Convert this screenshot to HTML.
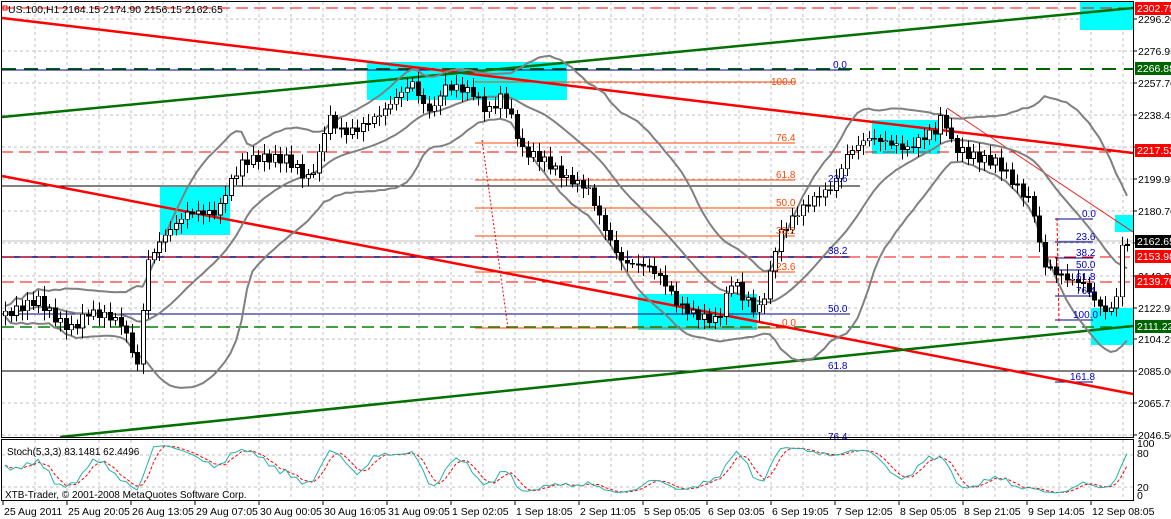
<!DOCTYPE html><html><head><meta charset="utf-8"><style>
html,body{margin:0;padding:0;background:#fff;width:1171px;height:519px;overflow:hidden}
svg{display:block;font-family:"Liberation Sans",sans-serif}
</style></head><body>
<svg id="s" width="1171" height="519" viewBox="0 0 1171 519" xmlns="http://www.w3.org/2000/svg" shape-rendering="crispEdges">
<rect width="1171" height="519" fill="#fff"/>
<g id="grid"></g>
<g fill="#00ffff">
<rect x="160" y="187" width="70" height="48"/>
<rect x="367" y="62" width="200" height="38"/>
<rect x="638" y="294" width="119" height="36"/>
<rect x="872" y="120" width="68" height="34"/>
<rect x="1080" y="2" width="53" height="28"/>
<rect x="1115" y="215" width="18" height="17"/>
<rect x="1091" y="308" width="42" height="37"/>
</g>
<g id="lines" shape-rendering="auto">
<line x1="2" y1="8" x2="1133" y2="8" stroke="#f00" stroke-dasharray="12,6"/>
<line x1="2" y1="69" x2="1133" y2="69" stroke="#006400" stroke-width="2" stroke-dasharray="14,8"/>
<line x1="2" y1="70" x2="850" y2="70" stroke="#000080"/>
<line x1="2" y1="186" x2="860" y2="186" stroke="#000"/>
<line x1="2" y1="371" x2="1133" y2="371" stroke="#000"/>
<line x1="2" y1="257" x2="850" y2="257" stroke="#000080" stroke-width="1.5"/>
<line x1="2" y1="257" x2="1133" y2="257" stroke="#f00" stroke-dasharray="12,6"/>
<line x1="2" y1="282" x2="1133" y2="282" stroke="#f00" stroke-dasharray="12,6"/>
<line x1="2" y1="314" x2="850" y2="314" stroke="#000080"/>
<line x1="2" y1="327" x2="1133" y2="327" stroke="#008000" stroke-dasharray="12,6" stroke-width="1.5"/>
<line x1="2" y1="241" x2="1133" y2="241" stroke="#c0c0c0"/>
<line x1="1" y1="152" x2="1133" y2="152" stroke="#f00" stroke-dasharray="12,6"/>
<g stroke="#ff4500">
<line x1="475" y1="82" x2="795" y2="82"/><line x1="475" y1="143" x2="795" y2="143"/>
<line x1="475" y1="180" x2="795" y2="180"/><line x1="475" y1="208" x2="795" y2="208"/>
<line x1="475" y1="236" x2="795" y2="236"/><line x1="475" y1="272" x2="795" y2="272"/>
<line x1="475" y1="328" x2="795" y2="328"/>
</g>
<line x1="482" y1="140" x2="508" y2="328" stroke="#f00" stroke-dasharray="2,2"/>
<g stroke="#00008b">
<line x1="1055" y1="219" x2="1093" y2="219"/><line x1="1055" y1="242" x2="1093" y2="242"/>
<line x1="1055" y1="258" x2="1093" y2="258"/><line x1="1055" y1="270" x2="1093" y2="270"/>
<line x1="1055" y1="296" x2="1093" y2="296"/><line x1="1055" y1="320" x2="1093" y2="320"/>
<line x1="1055" y1="382" x2="1093" y2="382"/>
</g>
<line x1="1057" y1="218" x2="1059" y2="322" stroke="#f00" stroke-dasharray="3,2"/>
<line x1="947" y1="108" x2="1133" y2="232" stroke="#f00" stroke-width="0.8"/>
<line x1="2" y1="18" x2="1133" y2="153" stroke="#f00" stroke-width="2.5"/>
<line x1="2" y1="176" x2="1133" y2="394" stroke="#f00" stroke-width="2.5"/>
<line x1="2" y1="117" x2="1133" y2="8" stroke="#007000" stroke-width="2.5"/>
<line x1="60" y1="437" x2="1133" y2="326" stroke="#007000" stroke-width="2.5"/>
</g>
<g id="bands" fill="none" stroke="#808080" stroke-width="2" shape-rendering="auto"></g>
<g id="candles"></g>
<g font-size="10" fill="#ff4500">
<text x="771" y="85">100.0</text><text x="776" y="141">76.4</text><text x="776" y="178">61.8</text>
<text x="776" y="206">50.0</text><text x="776" y="234">38.2</text><text x="776" y="270">23.6</text><text x="782" y="326">0.0</text>
</g>
<g font-size="10" fill="#0000cd">
<text x="833" y="68">0.0</text><text x="828" y="182">23.6</text><text x="828" y="254">38.2</text>
<text x="828" y="312">50.0</text><text x="828" y="369">61.8</text><text x="828" y="440">76.4</text>
<text x="1082" y="217">0.0</text><text x="1076" y="240">23.6</text><text x="1076" y="256">38.2</text>
<text x="1076" y="268">50.0</text><text x="1076" y="280">61.8</text><text x="1076" y="294">76.4</text>
<text x="1073" y="318">100.0</text><text x="1070" y="380">161.8</text>
</g>
<text x="8" y="13" font-size="10.5" fill="#000">US.100,H1  2164.15 2174.90 2156.15 2162.65</text>
<rect x="3" y="6" width="4" height="4" fill="none" stroke="#f00"/>
<rect x="1.5" y="1.5" width="1132" height="436" fill="none" stroke="#000"/>
<rect x="1.5" y="439.5" width="1132" height="61" fill="none" stroke="#000"/>
<g id="sub"></g>
<g id="axis" font-size="10.5" fill="#000"></g>
<text x="7" y="455" font-size="10" fill="#000">Stoch(5,3,3) 83.1481 62.4496</text>
<text x="5" y="498" font-size="10" fill="#000">XTB-Trader, © 2001-2008 MetaQuotes Software Corp.</text>
</svg>
<script>
var NS="http://www.w3.org/2000/svg";
function el(p,t,a,txt){var e=document.createElementNS(NS,t);for(var k in a)e.setAttribute(k,a[k]);if(txt!=null)e.textContent=txt;document.getElementById(p).appendChild(e);return e;}
function Y(p){return 8+(2302.75-p)*1.6663;}
for(var x=35;x<1133;x+=32)el("grid","line",{x1:x,y1:2,x2:x,y2:437,stroke:"#c0c0c0","stroke-dasharray":"3,3"});
for(var x=35;x<1133;x+=32)el("grid","line",{x1:x,y1:440,x2:x,y2:500,stroke:"#c0c0c0","stroke-dasharray":"3,3"});
var labs=[2296.2,2276.95,2257.7,2238.45,2219.2,2199.95,2180.7,2161.45,2142.2,2122.95,2104.25,2085.0,2065.75,2046.5];
labs.forEach(function(p){var y=Math.round(Y(p));el("grid","line",{x1:2,y1:y,x2:1133,y2:y,stroke:"#c0c0c0","stroke-dasharray":"3,3"});
el("axis","line",{x1:1133,y1:y,x2:1137,y2:y,stroke:"#000"});el("axis","text",{x:1138,y:y+4},p.toFixed(2));});
el("grid","line",{x1:2,y1:455,x2:1133,y2:455,stroke:"#c0c0c0","stroke-dasharray":"3,3"});
el("grid","line",{x1:2,y1:487,x2:1133,y2:487,stroke:"#c0c0c0","stroke-dasharray":"3,3"});
[["100",447],["80",457],["20",491],["0",499]].forEach(function(a){el("axis","text",{x:1137,y:a[1]},a[0]);});
var tl=["25 Aug 2011","25 Aug 20:05","26 Aug 13:05","29 Aug 07:05","30 Aug 00:05","30 Aug 16:05","31 Aug 09:05","1 Sep 02:05","1 Sep 18:05","2 Sep 11:05","5 Sep 05:05","6 Sep 03:05","6 Sep 19:05","7 Sep 12:05","8 Sep 05:05","8 Sep 21:05","9 Sep 14:05","12 Sep 08:05"];
tl.forEach(function(t,i){var x=3+i*64;el("axis","line",{x1:x,y1:500,x2:x,y2:505,stroke:"#000"});el("axis","text",{x:x+1,y:515},t);});
[[8,"2302.75","#f00","#fff"],[68,"2266.88","#006400","#fff"],[150,"2217.52","#f00","#fff"],[241,"2162.65","#000","#fff"],[256,"2153.98","#f00","#fff"],[281,"2139.70","#f00","#fff"],[326,"2111.22","#006400","#fff"]].forEach(function(a){
el("axis","rect",{x:1135,y:a[0]-6,width:36,height:13,fill:a[2]});el("axis","text",{x:1137,y:a[0]+4,fill:a[3]},a[1]);});
var K=[[5,2118],[20,2122],[40,2128],[60,2115],[75,2110],[90,2120],[110,2118],[125,2113],[140,2088],[150,2150],[165,2165],[190,2180],[220,2180],[230,2195],[245,2210],[260,2213],[290,2212],[310,2200],[320,2210],[330,2238],[345,2228],[360,2230],[385,2240],[400,2250],[415,2258],[425,2245],[435,2240],[445,2255],[460,2255],[475,2252],[490,2240],[505,2250],[515,2235],[525,2217],[545,2212],[570,2200],[590,2195],[600,2180],[615,2160],[625,2150],[650,2148],[665,2140],[680,2125],[700,2118],[720,2115],[735,2140],[745,2130],[760,2120],[770,2135],[780,2165],[800,2180],[820,2190],[835,2195],[850,2215],[870,2225],[890,2222],[910,2218],[925,2225],[940,2230],[945,2240],[955,2220],[970,2215],[985,2212],[1000,2210],[1020,2195],[1035,2185],[1045,2150],[1055,2145],[1070,2140],[1085,2138],[1100,2125],[1110,2120],[1118,2125],[1125,2162]];
function P(x){for(var i=0;i<K.length-1;i++){if(x<=K[i+1][0]){var t=(x-K[i][0])/(K[i+1][0]-K[i][0]);return K[i][1]+t*(K[i+1][1]-K[i][1]);}}return K[K.length-1][1];}
var bars=[],prev=P(5);
for(var x=5;x<=1127;x+=5.5){var c=P(x+3)+Math.sin(x*1.7)*2.5,o=prev,h=Math.max(o,c)+2+Math.abs(Math.sin(x*0.9))*4,l=Math.min(o,c)-2-Math.abs(Math.cos(x*1.3))*4;bars.push({x:x,o:o,c:c,h:h,l:l});prev=c;}
bars.forEach(function(b){var xx=Math.round(b.x);el("candles","line",{x1:xx+0.5,y1:Y(b.h),x2:xx+0.5,y2:Y(b.l),stroke:"#000"});
var t=Y(Math.max(b.o,b.c)),bt=Y(Math.min(b.o,b.c));el("candles","rect",{x:xx-1.5,y:t,width:4,height:Math.max(1,bt-t),fill:b.c>=b.o?"#fff":"#000",stroke:"#000","stroke-width":0.8});});
var N=20,up="",mid="",lo="";
for(var i=0;i<bars.length;i++){var s=Math.max(0,i-N+1),a=0,n=0;for(var j=s;j<=i;j++){a+=bars[j].c;n++;}var m=a/n,v=0;for(var j=s;j<=i;j++)v+=Math.pow(bars[j].c-m,2);var sd=Math.sqrt(v/n)+1.5;
var x=bars[i].x.toFixed(1);up+=(i?"L":"M")+x+","+Y(m+2*sd).toFixed(1);mid+=(i?"L":"M")+x+","+Y(m).toFixed(1);lo+=(i?"L":"M")+x+","+Y(m-2*sd).toFixed(1);}
[up,mid,lo].forEach(function(d){el("bands","path",{d:d});});
var k=[];for(var i=0;i<bars.length;i++){var s=Math.max(0,i-4),H=-1e9,L=1e9;for(var j=s;j<=i;j++){H=Math.max(H,bars[j].h);L=Math.min(L,bars[j].l);}k.push((bars[i].c-L)/(H-L)*100);}
function sm(a){return a.map(function(v,i){var s=Math.max(0,i-2),t=0;for(var j=s;j<=i;j++)t+=a[j];return t/(i-s+1);});}
var ks=sm(k),ds=sm(ks),pk="",pd="";
function SY(v){return 498-v*0.55;}
for(var i=0;i<bars.length;i++){pk+=(i?"L":"M")+bars[i].x.toFixed(1)+","+SY(ks[i]).toFixed(1);pd+=(i?"L":"M")+bars[i].x.toFixed(1)+","+SY(ds[i]).toFixed(1);}
el("sub","path",{d:pd,fill:"none",stroke:"#f00","stroke-dasharray":"3,2","shape-rendering":"auto"});
el("sub","path",{d:pk,fill:"none",stroke:"#20b2aa","shape-rendering":"auto"});
</script>
</body></html>
